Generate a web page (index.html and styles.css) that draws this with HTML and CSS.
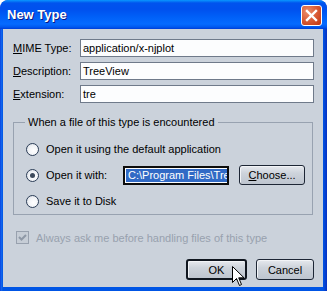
FILE: index.html
```html
<!DOCTYPE html>
<html>
<head>
<meta charset="utf-8">
<link rel="stylesheet" href="styles.css">
</head>
<body>
<div class="window">
  <div class="titlebar">
    <span class="title">New Type</span>
    <span class="close">
      <svg width="13" height="13" viewBox="0 0 13 13"><path d="M2 2 L11 11 M11 2 L2 11" stroke="#fff" stroke-width="2.4" stroke-linecap="square"/></svg>
    </span>
  </div>
  <div class="content">
    <div class="fields">
      <label class="lbl"><u>M</u>IME Type:</label>
      <div class="input">application/x-njplot</div>
      <label class="lbl"><u>D</u>escription:</label>
      <div class="input">TreeView</div>
      <label class="lbl"><u>E</u>xtension:</label>
      <div class="input">tre</div>
    </div>
    <fieldset class="group">
      <legend>When a file of this type is encountered</legend>
      <div class="row"><span class="radio"></span><span>Open it using the default application</span></div>
      <div class="row"><span class="radio checked"></span><span class="withlbl">Open it with:</span><div class="pathfield"><span class="sel">C:\Program Files\Tree</span></div><span class="btn choose"><u>C</u>hoose...</span></div>
      <div class="row"><span class="radio"></span><span>Save it to Disk</span></div>
    </fieldset>
    <div class="check"><span class="box"><svg width="11" height="11" viewBox="0 0 11 11"><path d="M2 5 L4.5 7.5 L9 3" fill="none" stroke="#8e98a6" stroke-width="2"/></svg></span><span>Always ask me before handling files of this type</span></div>
    <div class="buttons">
      <span class="btn default">OK</span>
      <span class="btn cancel">Cancel</span>
    </div>
  </div>
  <svg class="cursor" width="13" height="21" viewBox="0 0 13 21"><path d="M0.5 0.5 L0.5 16.5 L4.5 12.5 L7.5 19.5 L9.5 18.5 L6.7 11.8 L12 11.8 Z" fill="#fff" stroke="#000" stroke-width="1"/></svg>
</div>
</body>
</html>
```
FILE: styles.css
```css
html, body {
  margin: 0;
  padding: 0;
}
body {
  font-family: "Liberation Sans", Arial, sans-serif;
  font-size: 11px;
  color: #000;
}
.window {
  position: relative;
  width: 327px;
  height: 291px;
  box-sizing: border-box;
  display: flex;
  flex-direction: column;
  background: linear-gradient(to right, #0831d9 0, #166aee 1px, #0055e5 3px, #0055e5 323px, #0831c0 327px);
  border-radius: 8px 8px 0 0;
  overflow: hidden;
}
.titlebar {
  height: 29px;
  flex: none;
  display: flex;
  align-items: center;
  padding: 0 5px 0 7px;
  background: linear-gradient(to bottom, #0997ff 0, #0053ee 3px, #0050ee 9px, #0060f8 17px, #066bff 24px, #0059f0 27px, #003dd7 29px);
  border-radius: 8px 8px 0 0;
}
.title {
  flex: 1;
  color: #fff;
  font-weight: bold;
  font-size: 13px;
  text-shadow: 1px 1px 0 #0a1883;
  padding-bottom: 1px;
}
.close {
  width: 19px;
  height: 19px;
  border: 1px solid #fff;
  border-radius: 3px;
  background: radial-gradient(circle at 30% 30%, #eb8e6c 0, #d95b36 50%, #c2330f 100%);
  display: flex;
  align-items: center;
  justify-content: center;
  margin-top: 2px;
}
.content {
  flex: 1;
  margin: 0 4px 4px 3px;
  background: #cbd2db;
  padding: 10px 9px 0 10px;
  display: flex;
  flex-direction: column;
}
.fields {
  display: grid;
  grid-template-columns: 67px 234px;
  grid-auto-rows: 18px;
  row-gap: 5px;
  align-items: center;
}
.lbl {
  line-height: 18px;
}
.input {
  height: 18px;
  box-sizing: border-box;
  border: 1px solid #6f7a8a;
  background: #fcfdfe;
  padding-left: 2px;
  line-height: 16px;
  white-space: nowrap;
}
.group {
  margin: 13px 0 0 0;
  padding: 7px 0 0 12px;
  width: 300px;
  box-sizing: border-box;
  border: 1px solid #98a2b0;
  min-width: 0;
}
.group legend {
  margin-left: -1px;
  padding: 0 3px;
  line-height: 13px;
}
.row {
  height: 26px;
  display: flex;
  align-items: center;
  gap: 7px;
}
.radio {
  width: 11px;
  height: 11px;
  border-radius: 50%;
  border: 1px solid #2c3e57;
  background: radial-gradient(circle at 60% 60%, #fff 0, #f2f4f7 50%, #cfd5de 100%);
  flex: none;
  position: relative;
}
.radio.checked::after {
  content: "";
  position: absolute;
  left: 3px;
  top: 3px;
  width: 5px;
  height: 5px;
  border-radius: 50%;
  background: #3d4a5c;
}
.withlbl {
  width: 70px;
}
.pathfield {
  width: 106px;
  height: 19px;
  box-sizing: border-box;
  border: 2px solid #0c0c0c;
  background: #fff;
  padding: 1px 0 1px 1px;
  overflow: hidden;
  white-space: nowrap;
  display: flex;
}
.sel {
  background: #316ac5;
  color: #fff;
  line-height: 13px;
  padding-left: 2px;
  flex: 1;
  overflow: hidden;
}
.btn {
  box-sizing: border-box;
  height: 20px;
  display: flex;
  align-items: center;
  justify-content: center;
  border: 1px solid #1d2635;
  border-radius: 3px;
  background: linear-gradient(to bottom, #e6e9ee 0, #cdd3db 40%, #bec5cf 100%);
  box-shadow: inset 1px 1px 0 #f2f4f7;
}
.choose {
  width: 66px;
  margin-left: 3px;
}
.check {
  margin-top: 16px;
  margin-left: 3px;
  display: flex;
  align-items: center;
  gap: 7px;
  color: #98a1ae;
}
.box {
  width: 11px;
  height: 11px;
  border: 1px solid #98a1ae;
  background: #c6cdd6;
  display: flex;
}
.buttons {
  margin-top: 15px;
  display: flex;
  justify-content: flex-end;
  gap: 9px;
}
.buttons .btn {
  height: 21px;
}
.default {
  width: 61px;
  border: 2px solid #10161f;
}
.cancel {
  width: 58px;
}
.cursor {
  position: absolute;
  left: 232px;
  top: 266px;
}
```
